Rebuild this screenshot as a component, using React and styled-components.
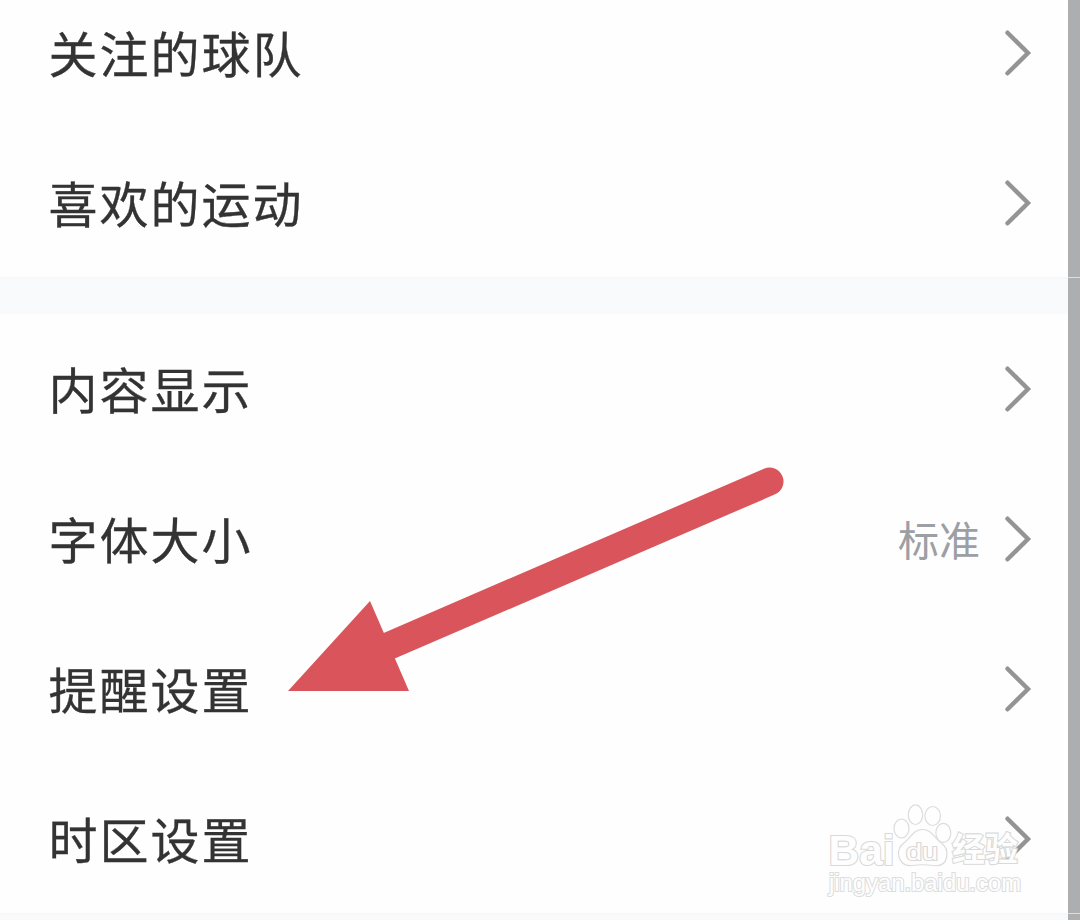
import styled, { createGlobalStyle } from "styled-components";

const teams = [{ label: "关注的球队" }, { label: "喜欢的运动" }];

const display = [
  { label: "内容显示" },
  { label: "字体大小", value: "标准" },
  { label: "提醒设置" },
  { label: "时区设置" },
];

function Chevron() {
  return (
    <svg width="28" height="48" viewBox="0 0 28 48" fill="none">
      <path
        d="M3.5 3.7L24 24L3.5 44.3"
        stroke="#949494"
        strokeWidth="4.4"
        strokeLinecap="round"
        strokeLinejoin="miter"
      />
    </svg>
  );
}

function Group({ items }) {
  return (
    <List>
      {items.map((item) => (
        <Row key={item.label}>
          <Label>{item.label}</Label>
          {item.value && <Value>{item.value}</Value>}
          <Chevron />
        </Row>
      ))}
    </List>
  );
}

function Watermark() {
  return (
    <WatermarkSvg width="200" height="112" viewBox="0 0 200 112">
      <ellipse cx="76.5" cy="28.5" rx="7.5" ry="9.5" />
      <ellipse cx="90.5" cy="14.7" rx="7.2" ry="9.8" />
      <ellipse cx="107.7" cy="16" rx="7.8" ry="9.5" />
      <ellipse cx="118.3" cy="32.8" rx="7.5" ry="9.5" />
      <path d="M97.5 29.5C89 29.5 86 37 80 42C74 46 72.5 51 74 57C76 64 81 66 87 65.5C94 64.5 101 64.5 108 65.5C115 66.5 120 64 121.5 58C123 52 121 46 115 42C109 37 106 29.5 97.5 29.5Z" />
      <BrandText x="3.5" y="64.5" fontSize="43" fontWeight="700" textLength="66" lengthAdjust="spacingAndGlyphs">
        Bai
      </BrandText>
      <BrandText x="81" y="59.5" fontSize="24" textLength="32" lengthAdjust="spacingAndGlyphs">
        du
      </BrandText>
      <BrandText x="127" y="61" fontSize="33" fontWeight="700">
        经验
      </BrandText>
      <UrlText x="4" y="91" fontSize="23" textLength="192" lengthAdjust="spacingAndGlyphs">
        jingyan.baidu.com
      </UrlText>
    </WatermarkSvg>
  );
}

export default function App() {
  return (
    <Screen>
      <GlobalStyle />
      <Panel>
        <Group items={teams} />
        <Divider />
        <Group items={display} />
        <Divider />
      </Panel>
      <Edge>
        <EdgeBlock $height={277} />
        <EdgeBlock $height={635} />
        <EdgeBlock $height={6} />
      </Edge>
      <Arrow width="510" height="230" viewBox="0 0 510 230">
        <path d="M489.5 17.5L104 184" stroke="#da555b" strokeWidth="28" strokeLinecap="round" />
        <path d="M8 227L90 137L129 227Z" fill="#da555b" />
      </Arrow>
      <Watermark />
    </Screen>
  );
}

const GlobalStyle = createGlobalStyle`
  body {
    margin: 0;
    overflow: hidden;
    background: #fefefe;
    font-family: "Noto Sans CJK SC", sans-serif;
  }
`;

const Screen = styled.div`
  position: relative;
  display: flex;
  width: 1080px;
  height: 920px;
  overflow: hidden;
`;

const Panel = styled.main`
  width: 1068px;
  margin-top: -22px;
  background: #fefefe;
`;

const List = styled.ul`
  margin: 0;
  padding: 0;
  list-style: none;
`;

const Row = styled.li`
  display: flex;
  align-items: center;
  box-sizing: border-box;
  height: 150px;
  padding: 0 36px 0 48.5px;
`;

const Label = styled.span`
  flex: 1;
  padding-bottom: 2px;
  font-size: 49px;
  line-height: 60px;
  letter-spacing: 2px;
  color: #333;
  -webkit-text-stroke: 0.3px #333;
`;

const Value = styled.span`
  margin-right: 24px;
  padding-bottom: 3px;
  font-size: 41px;
  line-height: 60px;
  color: #9c9fa3;
`;

const Divider = styled.div`
  box-sizing: border-box;
  height: 37px;
  margin-top: -1px;
  border-top: 2px solid #f8f8f8;
  background: #f9fafc;
`;

const Edge = styled.aside`
  display: flex;
  flex-direction: column;
  gap: 1px;
  width: 12px;
  background: #dedede;
`;

const EdgeBlock = styled.div`
  height: ${(props) => props.$height}px;
  background: #adaeaf;
`;

const Arrow = styled.svg`
  position: absolute;
  left: 280px;
  top: 464px;
  fill: none;
`;

const WatermarkSvg = styled.svg`
  position: absolute;
  left: 825px;
  top: 800px;
  fill: rgba(255, 255, 255, 0.3);
  stroke: #dcdcdc;
  stroke-width: 1.2px;
  font-family: "Liberation Sans", "Noto Sans CJK SC", sans-serif;
`;

const BrandText = styled.text`
  fill: #fefefe;
  stroke: #d9d9d9;
  stroke-width: 2.2px;
  paint-order: stroke;
`;

const UrlText = styled(BrandText)`
  stroke: #dedede;
`;
